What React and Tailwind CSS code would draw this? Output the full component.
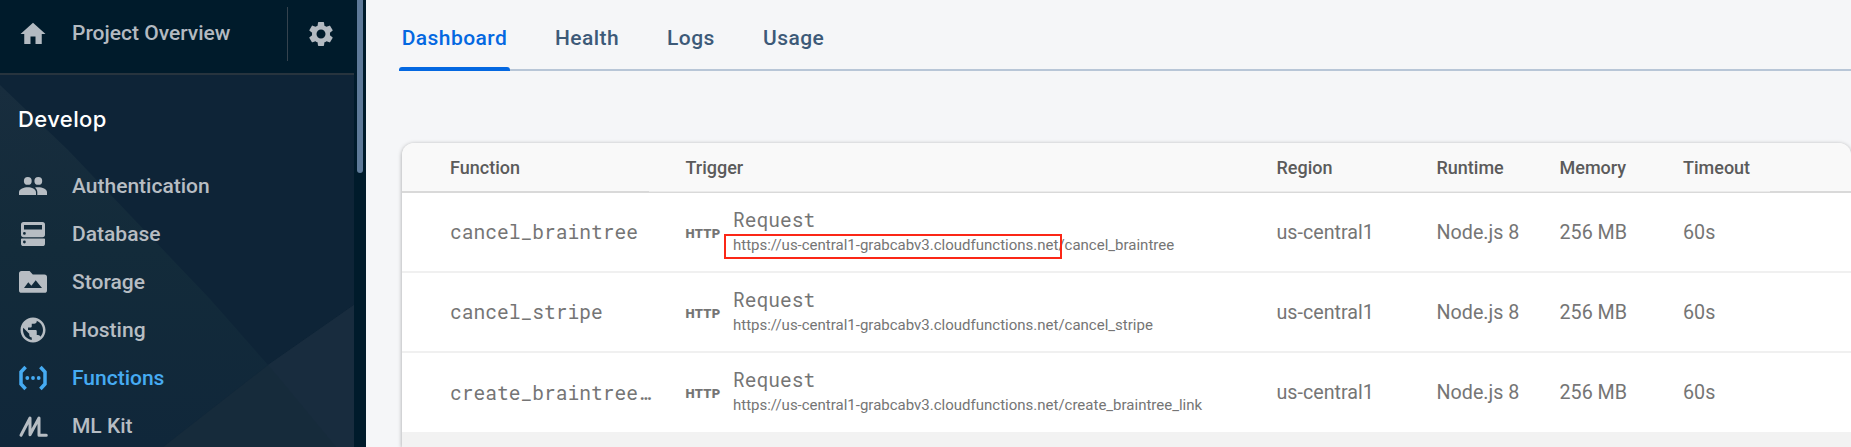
import { MdHome, MdPublic, MdSettings } from "react-icons/md";

function PeopleIcon({ className }) {
  return (
    <svg viewBox="0 0 30 30" className={className} fill="currentColor">
      <circle cx="9.8" cy="9.9" r="3.9" />
      <circle cx="20.3" cy="9.9" r="3.9" />
      <path d="M1 24v-3c0-3 5-4.7 8.800-4.700s8.200 1.700 8.200 5.200V24z" />
      <path d="M19.300 24v-2.900c0-2-1-3.500-2.300-4.600 1.200-.2 2.400-.2 3.300-.2 4 0 8.700 1.700 8.700 4.700v3z" />
    </svg>
  );
}

function DatabaseIcon({ className }) {
  return (
    <svg viewBox="0 0 30 30" className={className} fill="currentColor" fillRule="evenodd">
      <path d="M5.600 3h18.800a2.600 2.600 0 0 1 2.600 2.600v10a2.600 2.600 0 0 1-2.600 2.600H5.600a2.600 2.600 0 0 1-2.600-2.600v-10a2.600 2.600 0 0 1 2.600-2.600zM6 6v4.400h18V6zM6.400 13a1.400 1.400 0 1 0 0 2.800 1.400 1.400 0 0 0 0-2.800z" />
      <path d="M3.600 19.400h22.800l.6.6v4.400a2.600 2.600 0 0 1-2.600 2.600H5.600a2.600 2.600 0 0 1-2.600-2.600V20zM6.400 21.600a1.400 1.400 0 1 0 0 2.800 1.400 1.400 0 0 0 0-2.800z" />
    </svg>
  );
}

function StorageIcon({ className }) {
  return (
    <svg viewBox="0 0 30 30" className={className} fill="currentColor" fillRule="evenodd">
      <path d="M3.600 4h8l3.200 3.400h11.600A2.600 2.600 0 0 1 29 10V23.200a2.600 2.600 0 0 1-2.600 2.600H3.600A2.600 2.600 0 0 1 1 23.200V6.600A2.600 2.600 0 0 1 3.600 4zM6 21h18l-6.300-7.700-4.300 5.400-3.100-3.400z" />
    </svg>
  );
}

function FunctionsIcon({ className }) {
  return (
    <svg viewBox="0 0 30 30" className={className} fill="none" stroke="currentColor" strokeWidth="3.5">
      <path d="M7.600 4L3 9v12l4.600 5M22.400 4L27 9v12l-4.600 5" />
      <g fill="currentColor" stroke="none">
        <circle cx="9.3" cy="15" r="1.9" />
        <circle cx="15" cy="15" r="1.9" />
        <circle cx="20.7" cy="15" r="1.9" />
      </g>
    </svg>
  );
}

function MlIcon({ className }) {
  return (
    <svg
      viewBox="0 0 30 30"
      className={className}
      fill="none"
      stroke="currentColor"
      strokeWidth="3"
      strokeLinecap="round"
      strokeLinejoin="round"
    >
      <path d="M3 24.200L12 7V23.800L21 7V24.200H28.300" />
    </svg>
  );
}

const NAV = [
  { label: "Authentication", Icon: PeopleIcon },
  { label: "Database", Icon: DatabaseIcon },
  { label: "Storage", Icon: StorageIcon },
  { label: "Hosting", Icon: MdPublic },
  { label: "Functions", Icon: FunctionsIcon, active: true },
  { label: "ML Kit", Icon: MlIcon },
];

const TABS = ["Health", "Logs", "Usage"];

const HOST = "https://us-central1-grabcabv3.cloudfunctions.net";

const ROWS = [
  { name: "cancel_braintree", path: "cancel_braintree", marked: true },
  { name: "cancel_stripe", path: "cancel_stripe" },
  { name: "create_braintree…", path: "create_braintree_link" },
];

const SPECS = ["us-central1", "Node.js 8", "256 MB", "60s"];

const COLS = "grid grid-cols-[235.5px_591px_160px_123px_123.5px_1fr] pl-12";

function Sidebar() {
  return (
    <aside className="flex h-full w-[366px] shrink-0 bg-[#001b2b]">
      <div className="relative flex h-full w-[354px] flex-col overflow-hidden bg-[#0e2437]">
        <svg className="absolute inset-0 h-full w-full" viewBox="0 0 354 447">
          <defs>
            <linearGradient id="facet" x1="0" y1="0" x2="0" y2="1">
              <stop offset="0" stopColor="#182d3e" />
              <stop offset="0.45" stopColor="#132b3a" />
              <stop offset="1" stopColor="#10273a" />
            </linearGradient>
          </defs>
          <path d="M0 85L68 150L210 299L268 365L163 447H0z" fill="url(#facet)" />
          <path d="M354 305L268 365L163 447H354z" fill="#162b3b" />
          <path d="M354 305L268 365L284 384L336 447H354z" fill="#182c3e" />
        </svg>
        <div className="relative h-[75px] shrink-0 border-b-2 border-[#27343e] bg-[#001b2b] text-[#b3bac1]">
          <div className="flex h-[67px] items-center pl-[18px]">
            <MdHome className="size-[30px]" />
            <span className="ml-6 w-[215px] pt-px text-[21px] font-medium">Project Overview</span>
            <div className="h-[54px] w-px bg-[#35434e]" />
            <MdSettings className="ml-[18px] size-[30px]" />
          </div>
        </div>
        <h2 className="relative flex h-[88px] shrink-0 items-center pl-[18px] font-[Inter,sans-serif] text-[22px] font-medium tracking-[0.4px] text-white">
          Develop
        </h2>
        <nav className="relative flex flex-col">
          {NAV.map(({ label, Icon, active }) => (
            <a
              key={label}
              className={`flex h-12 shrink-0 items-center pl-[18px] text-[21px] font-medium ${active ? "text-[#46abf2]" : "text-[#b7bdc3]"}`}
            >
              <Icon className="-mt-0.5 size-[30px]" />
              <span className="ml-6">{label}</span>
            </a>
          ))}
        </nav>
      </div>
      <div className="ml-[3px] h-[173px] w-1.5 rounded-b-full bg-[#5e7a99]" />
    </aside>
  );
}

function Row({ name, path, marked }) {
  return (
    <div
      className={`${COLS} h-20 items-center border-b-2 border-[#f0f0f0] bg-white text-[19.7px] text-[#757575] last:h-[78.5px] last:border-b-0`}
    >
      <div className="font-['Roboto_Mono','Liberation_Mono',monospace] text-[19.6px] whitespace-nowrap">{name}</div>
      <div className="flex items-center">
        <span className="mt-[3px] w-[47.5px] text-[13px] font-black tracking-[0.3px]">HTTP</span>
        <div>
          <div className="font-['Roboto_Mono','Liberation_Mono',monospace] text-[19.6px] leading-[26px]">Request</div>
          <div className="relative text-[15px] leading-[26px] whitespace-nowrap">
            {HOST}/{path}
            {marked && <div className="absolute top-[2px] -left-[9px] h-[25px] w-[338px] border-2 border-[#fb2717]" />}
          </div>
        </div>
      </div>
      {SPECS.map((s) => (
        <div key={s} className="pt-0.5">
          {s}
        </div>
      ))}
    </div>
  );
}

export default function App() {
  return (
    <div className="flex h-[447px] w-[1851px] overflow-hidden bg-[#f5f6f8] font-[Roboto,sans-serif]">
      <Sidebar />
      <main className="flex min-w-0 flex-1 flex-col">
        <div className="ml-[33px] flex h-[71px] shrink-0 border-b-2 border-[#b8c6d7] text-[21px] font-medium tracking-[0.45px] text-[#3d5a78]">
          <div className="-mb-0.5 flex w-[111px] flex-col text-[#0468e1]">
            <span className="flex h-[67px] items-center justify-center pt-[11px]">Dashboard</span>
            <div className="h-1 rounded-t-[3px] bg-[#0468e1]" />
          </div>
          <div className="ml-[45px] grid grid-cols-[112px_96px_96px] items-center pt-[9px]">
            {TABS.map((t) => (
              <span key={t}>{t}</span>
            ))}
          </div>
        </div>
        <div className="mt-[72px] ml-9 flex-1 overflow-hidden rounded-t-xl bg-[#f2f2f2] shadow-[0_1px_4px_rgba(0,0,0,0.35)]">
          <div className={`${COLS} h-12 items-center bg-[#f9f9f9] pt-px text-[18px] font-medium text-[#5b5b5b]`}>
            <div>Function</div>
            <div>Trigger</div>
            <div>Region</div>
            <div>Runtime</div>
            <div>Memory</div>
            <div>Timeout</div>
          </div>
          <div className="flex h-0.5">
            <div className="w-[247px] bg-[#d9d9d9]" />
            <div className="flex-1 border-t border-[#ebebeb] bg-[#d9d9d9]" />
            <div className="w-[81px] bg-[#d9d9d9]" />
          </div>
          <div>
            {ROWS.map((r) => (
              <Row key={r.path} {...r} />
            ))}
          </div>
        </div>
      </main>
    </div>
  );
}
